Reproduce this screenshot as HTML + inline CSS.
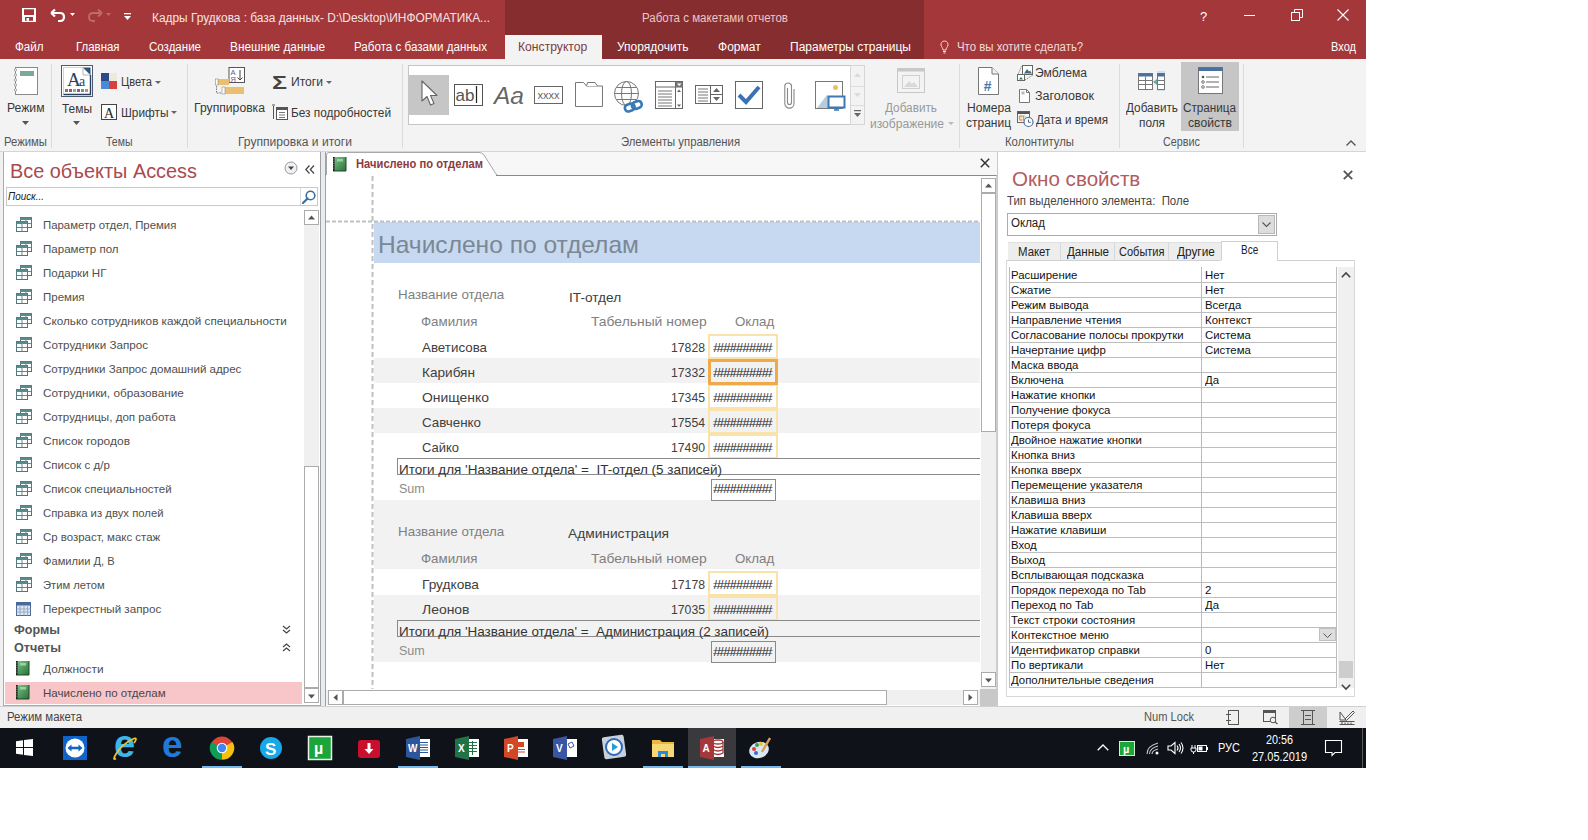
<!DOCTYPE html>
<html><head><meta charset="utf-8"><style>
html,body{margin:0;padding:0;background:#fff;}
body{width:1588px;height:840px;position:relative;overflow:hidden;font-family:"Liberation Sans",sans-serif;}
.b{position:absolute;box-sizing:border-box;}
.t{position:absolute;white-space:pre;line-height:1.117;transform-origin:0 0;font-family:"Liberation Sans",sans-serif;}
svg{position:absolute;overflow:visible;}
</style></head><body>
<div class=b style="left:0px;top:0px;width:1366px;height:768px;background:#F0F0F0"></div>
<div class=b style="left:0px;top:0px;width:1366px;height:59px;background:#A4373A"></div>
<div class=b style="left:505px;top:0px;width:419px;height:59px;background:#862D30"></div>
<div class=b style="left:505px;top:35px;width:97px;height:24px;background:#F3F3F3"></div>
<div class=b style="left:0px;top:59px;width:1366px;height:93px;background:#F3F3F3;border-bottom:1px solid #D5D5D5"></div>
<svg style="left:22px;top:8px" width="14" height="14" viewBox="0 0 14 14"><rect x="0" y="0" width="14" height="14" fill="#fff"/><rect x="2" y="1.3" width="10" height="5.7" fill="#A4373A"/><rect x="3" y="9" width="8" height="3.8" fill="#A4373A"/><rect x="4.5" y="10" width="2.5" height="2.8" fill="#fff"/></svg>
<svg style="left:50px;top:8px" width="26" height="14" viewBox="0 0 26 14"><path d="M3 5 H10 Q14 5 14 9 Q14 13 10 13 H8" fill="none" stroke="#fff" stroke-width="2.2"/><path d="M1.2 5 L5 1.5 M1.2 5 L5 8.5" stroke="#fff" stroke-width="2.2" fill="none"/><path d="M20 5 L25 5 L22.5 8 Z" fill="#fff"/></svg>
<svg style="left:86px;top:8px" width="26" height="14" viewBox="0 0 26 14"><path d="M14 5 H7 Q3 5 3 9 Q3 13 7 13 H9" fill="none" stroke="#C06A6C" stroke-width="1.8"/><path d="M16 5 L12 1.5 M16 5 L12 8.5" stroke="#C06A6C" stroke-width="1.8" fill="none"/><path d="M20 5 L25 5 L22.5 8 Z" fill="#C06A6C"/></svg>
<svg style="left:123px;top:13px" width="9" height="8" viewBox="0 0 9 8"><rect x="1" y="0" width="7" height="1.3" fill="#fff"/><path d="M1 3 L8 3 L4.5 7 Z" fill="#fff"/></svg>
<div class=b style="left:1244px;top:15px;width:11px;height:1px;background:#fff"></div>
<svg style="left:1291px;top:9px" width="12" height="12" viewBox="0 0 12 12"><rect x="0.5" y="3.5" width="8" height="8" fill="none" stroke="#fff"/><path d="M3.5 3.5 V0.5 H11.5 V8.5 H8.5" fill="none" stroke="#fff"/></svg>
<svg style="left:1337px;top:9px" width="12" height="12" viewBox="0 0 12 12"><path d="M0.5 0.5 L11.5 11.5 M11.5 0.5 L0.5 11.5" stroke="#fff" stroke-width="1.1"/></svg>
<svg style="left:940px;top:40px" width="9" height="14" viewBox="0 0 9 14"><path d="M4.5 1 C1.5 1 0.8 3.5 1 5 C1.3 7 3 8 3 10 H6 C6 8 7.7 7 8 5 C8.2 3.5 7.5 1 4.5 1 Z" fill="none" stroke="#F3D9D9" stroke-width="1"/><path d="M3 11.5 H6 M3.5 13 H5.5" stroke="#F3D9D9"/></svg>
<div class=b style="left:51px;top:64px;width:1px;height:84px;background:#DCDCDC"></div>
<div class=b style="left:187px;top:64px;width:1px;height:84px;background:#DCDCDC"></div>
<div class=b style="left:402px;top:64px;width:1px;height:84px;background:#DCDCDC"></div>
<div class=b style="left:959px;top:64px;width:1px;height:84px;background:#DCDCDC"></div>
<div class=b style="left:1119px;top:64px;width:1px;height:84px;background:#DCDCDC"></div>
<div class=b style="left:1243px;top:64px;width:1px;height:84px;background:#DCDCDC"></div>
<svg style="left:14px;top:67px" width="24" height="28" viewBox="0 0 24 28"><rect x="1.5" y="0.5" width="22" height="27" fill="#fff" stroke="#8A8A8A"/><rect x="6" y="4" width="14" height="5" fill="#7BA89A"/><circle cx="1.5" cy="3" r="1.2" fill="#fff" stroke="#888" stroke-width=".7"/><circle cx="1.5" cy="8" r="1.2" fill="#fff" stroke="#888" stroke-width=".7"/><circle cx="1.5" cy="13" r="1.2" fill="#fff" stroke="#888" stroke-width=".7"/><circle cx="1.5" cy="18" r="1.2" fill="#fff" stroke="#888" stroke-width=".7"/><circle cx="1.5" cy="23" r="1.2" fill="#fff" stroke="#888" stroke-width=".7"/></svg>
<svg style="left:22px;top:121px" width="7" height="4" viewBox="0 0 7 4"><path d="M0 0 H7 L3.5 4Z" fill="#555"/></svg>
<svg style="left:61px;top:65px" width="32" height="32" viewBox="0 0 32 32"><rect x="0.5" y="0.5" width="31" height="31" fill="#fff" stroke="#4A5A70"/><path d="M2.5 2.5 H22 L29.5 10 V29.5 H2.5Z" fill="#fff" stroke="#C0C8D0" stroke-width=".8"/><path d="M22 2.5 H29.5 V10Z" fill="#2F4F7F"/><path d="M22 2.5 V10 H29.5" fill="none" stroke="#999" stroke-width=".7"/><text x="6" y="21" font-family="Liberation Serif" font-size="19" fill="#2A3F5F">A</text><text x="18" y="21" font-family="Liberation Serif" font-size="14" fill="#2A3F5F">a</text><path d="M29.5 10 V29.5 H2.5" fill="none" stroke="#2A3F5F" stroke-width="1.4"/><rect x="4" y="24" width="3" height="3" fill="#8A6E7E"/><rect x="8" y="24" width="3" height="3" fill="#A05A5A"/><rect x="12" y="24" width="3" height="3" fill="#9AAA7A"/><rect x="16" y="24" width="3" height="3" fill="#8A5A8A"/><rect x="20" y="24" width="3" height="3" fill="#6A9A8A"/><rect x="24" y="24" width="3" height="3" fill="#D08A6A"/></svg>
<svg style="left:73px;top:121px" width="7" height="4" viewBox="0 0 7 4"><path d="M0 0 H7 L3.5 4Z" fill="#555"/></svg>
<svg style="left:101px;top:73px" width="16" height="16" viewBox="0 0 16 16"><rect x="0" y="0" width="8" height="8" fill="#2B4A8A"/><rect x="8" y="0" width="8" height="8" fill="#F1E8DC"/><rect x="0" y="8" width="8" height="8" fill="#4A8AD8"/><rect x="8" y="8" width="8" height="8" fill="#D84040"/></svg>
<svg style="left:155px;top:81px" width="6" height="3" viewBox="0 0 6 3"><path d="M0 0 H6 L3 3Z" fill="#666"/></svg>
<svg style="left:101px;top:104px" width="16" height="16" viewBox="0 0 16 16"><rect x="0.5" y="0.5" width="15" height="15" fill="#fff" stroke="#444"/><text x="3" y="13.5" font-family="Liberation Serif" font-size="14" fill="#222">A</text></svg>
<svg style="left:171px;top:111px" width="6" height="3" viewBox="0 0 6 3"><path d="M0 0 H6 L3 3Z" fill="#666"/></svg>
<svg style="left:215px;top:67px" width="30" height="28" viewBox="0 0 30 28"><rect x="14" y="0.5" width="15.5" height="15" fill="#fff" stroke="#555"/><text x="15.5" y="7.5" font-size="7.5" font-family="Liberation Sans" fill="#3A6AA8">А</text><text x="15.5" y="14.5" font-size="7.5" font-family="Liberation Sans" fill="#8A4A8A">Я</text><path d="M25 3 V13 M22.5 10.5 L25 13 L27.5 10.5" stroke="#444" fill="none"/><rect x="3" y="12" width="11" height="6" fill="#EAC070"/><rect x="0.5" y="12" width="2.5" height="6" fill="#fff" stroke="#999" stroke-width=".7"/><rect x="10" y="20" width="19" height="7" fill="#EAC070"/><rect x="7" y="20" width="3" height="7" fill="#fff" stroke="#999" stroke-width=".7"/><path d="M1.5 19 V26 H6" stroke="#777" stroke-dasharray="1.5 1" fill="none"/></svg>
<svg style="left:326px;top:81px" width="6" height="3" viewBox="0 0 6 3"><path d="M0 0 H6 L3 3Z" fill="#666"/></svg>
<svg style="left:272px;top:104px" width="16" height="16" viewBox="0 0 16 16"><rect x="4.5" y="3.5" width="11" height="12" fill="#fff" stroke="#555"/><rect x="4.5" y="3.5" width="11" height="2.5" fill="#555"/><path d="M7 8.5 H13 M7 11 H13 M7 13.5 H13" stroke="#777"/><path d="M1.5 2 V15" stroke="#555"/><path d="M0 1 H3" stroke="#555"/></svg>
<div class=b style="left:408px;top:65px;width:443px;height:60px;background:#FFFFFF;border:1px solid #C6C6C6;border-right:none"></div>
<div class=b style="left:850px;top:65px;width:15px;height:60px;background:#F3F3F3;border:1px solid #D6D6D6"></div>
<div class=b style="left:851px;top:86px;width:13px;height:1px;background:#DCDCDC"></div>
<div class=b style="left:851px;top:105px;width:13px;height:1px;background:#DCDCDC"></div>
<svg style="left:854px;top:73px" width="7" height="4" viewBox="0 0 7 4"><path d="M0 4 L3.5 0 L7 4Z" fill="#DADADA"/></svg>
<svg style="left:854px;top:93px" width="7" height="4" viewBox="0 0 7 4"><path d="M0 0 L3.5 4 L7 0Z" fill="#DADADA"/></svg>
<svg style="left:853px;top:110px" width="9" height="9" viewBox="0 0 9 9"><rect x="1" y="0" width="7" height="1.2" fill="#666"/><path d="M1 3 H8 L4.5 7Z" fill="#666"/></svg>
<div class=b style="left:409px;top:75px;width:40px;height:40px;background:#C6C6C6"></div>
<svg style="left:421px;top:80px" width="18" height="28" viewBox="0 0 18 28"><path d="M1 1 L1 21 L6 16.5 L9.5 25 L13 23.5 L9.5 15.5 L16 15.5 Z" fill="#fff" stroke="#666" stroke-width="1.1" stroke-linejoin="round"/></svg>
<svg style="left:454px;top:84px" width="29" height="22" viewBox="0 0 29 22"><rect x="0.5" y="0.5" width="28" height="21" fill="#fff" stroke="#555"/><text x="1.5" y="16.5" font-family="Liberation Sans" font-size="17" fill="#555">ab</text><path d="M22.5 2 V19" stroke="#222" stroke-width="1.2"/></svg>
<svg style="left:534px;top:86px" width="29" height="18" viewBox="0 0 29 18"><rect x="0.5" y="0.5" width="28" height="17" fill="#fff" stroke="#666"/><text x="3.5" y="12.5" font-family="Liberation Sans" font-size="11" fill="#666">xxxx</text></svg>
<svg style="left:575px;top:82px" width="28" height="25" viewBox="0 0 28 25"><path d="M0.5 0.5 H8.5 L11.5 4 H27.5 V24.5 H0.5Z" fill="#fff" stroke="#777"/><path d="M11.5 4 L12.5 0.5 H20 L22.5 4" fill="#fff" stroke="#777"/></svg>
<svg style="left:614px;top:81px" width="32" height="31" viewBox="0 0 32 31"><circle cx="12.5" cy="12.5" r="12" fill="none" stroke="#777"/><ellipse cx="12.5" cy="12.5" rx="5" ry="12" fill="none" stroke="#777"/><path d="M0.5 12.5 H24.5 M2.5 6.5 H22.5 M2.5 18.5 H22.5" stroke="#777" fill="none"/><g transform="rotate(-20 20 25)"><rect x="10.5" y="21.5" width="10" height="7" rx="3.5" fill="#fff" stroke="#3A78B8" stroke-width="2.6"/><rect x="18" y="21.5" width="10" height="7" rx="3.5" fill="none" stroke="#3A78B8" stroke-width="2.6"/></g></svg>
<svg style="left:655px;top:81px" width="28" height="28" viewBox="0 0 28 28"><rect x="0.5" y="0.5" width="27" height="27" fill="#fff" stroke="#666"/><path d="M20.5 0.5 V27.5 M0.5 6 H27.5" stroke="#666"/><rect x="21" y="1" width="6.5" height="5" fill="#777"/><path d="M22 2.5 L24.2 5 L26.5 2.5Z" fill="#fff"/><path d="M22 11 L24 8.5 L26 11Z M22 23.5 L24 26 L26 23.5Z" fill="#666"/><path d="M3 10 H17 M3 13 H17 M3 16 H17 M3 19 H17 M3 22 H17 M3 25 H17" stroke="#777"/></svg>
<svg style="left:695px;top:85px" width="28" height="19" viewBox="0 0 28 19"><rect x="0.5" y="0.5" width="27" height="18" fill="#fff" stroke="#666"/><path d="M15.5 0.5 V18.5 M15.5 9.5 H27.5" stroke="#666"/><path d="M3 4 H13 M3 7 H13 M3 10 H13 M3 13 H13 M3 16 H13" stroke="#777"/><path d="M18 7 L21.5 3 L25 7Z M18 12 L21.5 16 L25 12Z" fill="#666"/></svg>
<svg style="left:735px;top:81px" width="28" height="28" viewBox="0 0 28 28"><rect x="0.5" y="0.5" width="27" height="27" fill="#fff" stroke="#666"/><path d="M4 14 L11 21 L24 6" fill="none" stroke="#3C72B4" stroke-width="4"/></svg>
<svg style="left:784px;top:81px" width="11" height="28" viewBox="0 0 11 28"><path d="M3.5 7 V21.5 A2 2 0 0 0 7.5 21.5 V4.5 A3.5 3.5 0 0 0 0.8 4.5 V22.5 A4.6 4.6 0 0 0 10 22.5 V8" fill="none" stroke="#888" stroke-width="1.1"/></svg>
<svg style="left:815px;top:81px" width="31" height="31" viewBox="0 0 31 31"><rect x="0.5" y="0.5" width="27" height="27" fill="#fff" stroke="#777"/><circle cx="20.5" cy="6.5" r="2.5" fill="#E8C060"/><path d="M2 27 L12 14 L16 19 V27Z" fill="#B8CCE0"/><rect x="13.5" y="15.5" width="16" height="11" fill="#fff" stroke="#3A78B8" stroke-width="2"/><path d="M19 29 H24 M21.5 27 V29" stroke="#3A78B8" stroke-width="1.5"/></svg>
<svg style="left:897px;top:68px" width="28" height="25" viewBox="0 0 28 25"><rect x="0.5" y="0.5" width="27" height="24" fill="#F3F3F3" stroke="#C8C8C8"/><rect x="0.5" y="0.5" width="27" height="3" fill="#C8C8C8"/><rect x="5.5" y="7.5" width="17" height="13" fill="none" stroke="#D0D0D0"/><path d="M7 19 L12 13 L15 16 L17 14 L21 19Z" fill="#D8D8D8"/></svg>
<svg style="left:948px;top:122px" width="6" height="3" viewBox="0 0 6 3"><path d="M0 0 H6 L3 3Z" fill="#BBB"/></svg>
<svg style="left:978px;top:67px" width="22" height="28" viewBox="0 0 22 28"><path d="M0.5 0.5 H14 L20.5 7 V27.5 H0.5Z" fill="#fff" stroke="#777"/><path d="M14 0.5 V7 H20.5" fill="#F3F3F3" stroke="#777"/><text x="5.5" y="23.5" font-family="Liberation Sans" font-size="14" font-weight="bold" font-style="italic" fill="#4A78B0">#</text></svg>
<svg style="left:1017px;top:65px" width="17" height="16" viewBox="0 0 17 16"><rect x="5.5" y="0.5" width="10" height="9" fill="#fff" stroke="#666"/><path d="M7 8.5 L10 4 L12 6.5 L13 5.5 L15 8.5Z" fill="#3A7080"/><rect x="0.5" y="9.5" width="7" height="6" fill="#fff" stroke="#666"/><path d="M2 14.5 L4 12 L6 14.5Z" fill="#3A7080"/><path d="M1.5 8.5 L4.5 1" stroke="#666" stroke-dasharray="1 1.2"/><path d="M8 15 L16 10" stroke="#666" stroke-dasharray="1 1.2"/></svg>
<svg style="left:1019px;top:89px" width="12" height="15" viewBox="0 0 12 15"><path d="M0.5 0.5 H7.5 L10.5 3.5 V13.5 H0.5Z" fill="#fff" stroke="#777"/><path d="M7.5 0.5 V3.5 H10.5" fill="none" stroke="#777"/><rect x="2.5" y="2.5" width="3" height="3" fill="#C8B4A8"/></svg>
<svg style="left:1017px;top:111px" width="18" height="17" viewBox="0 0 18 17"><rect x="0.5" y="0.5" width="12" height="11" fill="#fff" stroke="#666"/><rect x="0.5" y="0.5" width="12" height="2.5" fill="#555"/><path d="M0.5 6 H12.5 M4 3 V11.5 M8 3 V11.5" stroke="#BBB" stroke-width=".6"/><rect x="2.5" y="5" width="4" height="4" fill="none" stroke="#E09850" stroke-width="1.2"/><circle cx="11.5" cy="11" r="4.5" fill="#fff" stroke="#4A6A8A" stroke-width="1.1"/><path d="M11.5 8.5 V11.3 H13.8" stroke="#4A6A8A" fill="none"/></svg>
<svg style="left:1138px;top:71px" width="27" height="20" viewBox="0 0 27 20"><rect x="0.5" y="2.5" width="14" height="16" fill="#fff" stroke="#777"/><rect x="0.5" y="2.5" width="14" height="3" fill="#4A70A0"/><path d="M0.5 9.5 H14.5 M0.5 13.5 H14.5 M7.5 5.5 V18.5" stroke="#777"/><rect x="19" y="0" width="8" height="20" fill="#D0E0EC"/><rect x="19.5" y="2.5" width="7" height="16" fill="#fff" stroke="#777"/><rect x="19.5" y="2.5" width="7" height="3" fill="#4A70A0"/><path d="M19.5 9.5 H26.5 M19.5 13.5 H26.5" stroke="#777"/><path d="M15 11 L19 8 V14Z" fill="#6AA8A0"/></svg>
<div class=b style="left:1181px;top:62px;width:58px;height:69px;background:#C6C6C6"></div>
<svg style="left:1198px;top:67px" width="25" height="27" viewBox="0 0 25 27"><rect x="0.5" y="0.5" width="24" height="26" fill="#fff" stroke="#777"/><rect x="0.5" y="0.5" width="24" height="3.5" fill="#4A70A0"/><circle cx="5" cy="10" r="1.3" fill="#555"/><circle cx="5" cy="15" r="1.3" fill="none" stroke="#555" stroke-width=".8"/><circle cx="5" cy="20" r="1.3" fill="none" stroke="#555" stroke-width=".8"/><path d="M8 10 H21 M8 15 H21 M8 20 H21" stroke="#666"/></svg>
<svg style="left:1346px;top:140px" width="10" height="6" viewBox="0 0 10 6"><path d="M0.5 5.5 L5 1 L9.5 5.5" fill="none" stroke="#555" stroke-width="1.4"/></svg>
<div class=b style="left:3px;top:152px;width:318px;height:554px;background:#fff;border:1px solid #ABABAB;border-top:none"></div>
<svg style="left:284px;top:161px" width="14" height="14" viewBox="0 0 14 14"><circle cx="7" cy="7" r="6" fill="#EEF0F4" stroke="#9A9A9A"/><path d="M4 5.5 H10 L7 9Z" fill="#444"/></svg>
<svg style="left:305px;top:165px" width="10" height="9" viewBox="0 0 10 9"><path d="M4.5 0.5 L0.8 4.5 L4.5 8.5 M9 0.5 L5.3 4.5 L9 8.5" fill="none" stroke="#444" stroke-width="1.2"/></svg>
<div class=b style="left:6px;top:187px;width:312px;height:19px;background:#fff;border:1px solid #C9C9C9"></div>
<div class=b style="left:300px;top:188px;width:1px;height:17px;background:#DADADA"></div>
<svg style="left:302px;top:190px" width="14" height="14" viewBox="0 0 14 14"><circle cx="8.5" cy="5.5" r="4.3" fill="none" stroke="#3C6E9C" stroke-width="1.6"/><path d="M5.5 8.5 L1 13" stroke="#3C6E9C" stroke-width="2.2" stroke-linecap="round"/></svg>
<div class=b style="left:304px;top:210px;width:15px;height:478px;background:#F0F0F0"></div>
<div class=b style="left:304px;top:210px;width:15px;height:15px;background:#fff;border:1px solid #ABABAB"></div>
<svg style="left:308px;top:215px" width="8" height="5" viewBox="0 0 8 5"><path d="M0 4.5 L3.5 0.5 L7 4.5Z" fill="#555"/></svg>
<div class=b style="left:304px;top:466px;width:15px;height:222px;background:#fff;border:1px solid #ABABAB"></div>
<div class=b style="left:304px;top:688px;width:15px;height:15px;background:#fff;border:1px solid #ABABAB"></div>
<svg style="left:308px;top:694px" width="8" height="5" viewBox="0 0 8 5"><path d="M0 0.5 L3.5 4.5 L7 0.5Z" fill="#555"/></svg>
<div class=b style="left:320px;top:152px;width:6px;height:554px;background:#E8ECF2;border-left:1px solid #A0A0A0;border-right:1px solid #A0A0A0"></div>
<svg style="left:16px;top:217.0px" width="16" height="15" viewBox="0 0 16 15"><rect x="4.5" y="0.5" width="11" height="10" fill="#fff" stroke="#4A7A7A"/><rect x="4.5" y="0.5" width="11" height="2.5" fill="#5A8A8A"/><path d="M10 3 V10.5 M4.5 6.5 H15.5" stroke="#5A8A8A"/><rect x="0.5" y="4.5" width="11" height="10" fill="#fff" stroke="#4A7A7A"/><rect x="0.5" y="4.5" width="11" height="2.5" fill="#5A8A8A"/><path d="M6 7 V14.5 M0.5 10.5 H11.5" stroke="#5A8A8A"/></svg>
<svg style="left:16px;top:241.0px" width="16" height="15" viewBox="0 0 16 15"><rect x="4.5" y="0.5" width="11" height="10" fill="#fff" stroke="#4A7A7A"/><rect x="4.5" y="0.5" width="11" height="2.5" fill="#5A8A8A"/><path d="M10 3 V10.5 M4.5 6.5 H15.5" stroke="#5A8A8A"/><rect x="0.5" y="4.5" width="11" height="10" fill="#fff" stroke="#4A7A7A"/><rect x="0.5" y="4.5" width="11" height="2.5" fill="#5A8A8A"/><path d="M6 7 V14.5 M0.5 10.5 H11.5" stroke="#5A8A8A"/></svg>
<svg style="left:16px;top:265.0px" width="16" height="15" viewBox="0 0 16 15"><rect x="4.5" y="0.5" width="11" height="10" fill="#fff" stroke="#4A7A7A"/><rect x="4.5" y="0.5" width="11" height="2.5" fill="#5A8A8A"/><path d="M10 3 V10.5 M4.5 6.5 H15.5" stroke="#5A8A8A"/><rect x="0.5" y="4.5" width="11" height="10" fill="#fff" stroke="#4A7A7A"/><rect x="0.5" y="4.5" width="11" height="2.5" fill="#5A8A8A"/><path d="M6 7 V14.5 M0.5 10.5 H11.5" stroke="#5A8A8A"/></svg>
<svg style="left:16px;top:289.0px" width="16" height="15" viewBox="0 0 16 15"><rect x="4.5" y="0.5" width="11" height="10" fill="#fff" stroke="#4A7A7A"/><rect x="4.5" y="0.5" width="11" height="2.5" fill="#5A8A8A"/><path d="M10 3 V10.5 M4.5 6.5 H15.5" stroke="#5A8A8A"/><rect x="0.5" y="4.5" width="11" height="10" fill="#fff" stroke="#4A7A7A"/><rect x="0.5" y="4.5" width="11" height="2.5" fill="#5A8A8A"/><path d="M6 7 V14.5 M0.5 10.5 H11.5" stroke="#5A8A8A"/></svg>
<svg style="left:16px;top:313.0px" width="16" height="15" viewBox="0 0 16 15"><rect x="4.5" y="0.5" width="11" height="10" fill="#fff" stroke="#4A7A7A"/><rect x="4.5" y="0.5" width="11" height="2.5" fill="#5A8A8A"/><path d="M10 3 V10.5 M4.5 6.5 H15.5" stroke="#5A8A8A"/><rect x="0.5" y="4.5" width="11" height="10" fill="#fff" stroke="#4A7A7A"/><rect x="0.5" y="4.5" width="11" height="2.5" fill="#5A8A8A"/><path d="M6 7 V14.5 M0.5 10.5 H11.5" stroke="#5A8A8A"/></svg>
<svg style="left:16px;top:337.0px" width="16" height="15" viewBox="0 0 16 15"><rect x="4.5" y="0.5" width="11" height="10" fill="#fff" stroke="#4A7A7A"/><rect x="4.5" y="0.5" width="11" height="2.5" fill="#5A8A8A"/><path d="M10 3 V10.5 M4.5 6.5 H15.5" stroke="#5A8A8A"/><rect x="0.5" y="4.5" width="11" height="10" fill="#fff" stroke="#4A7A7A"/><rect x="0.5" y="4.5" width="11" height="2.5" fill="#5A8A8A"/><path d="M6 7 V14.5 M0.5 10.5 H11.5" stroke="#5A8A8A"/></svg>
<svg style="left:16px;top:361.0px" width="16" height="15" viewBox="0 0 16 15"><rect x="4.5" y="0.5" width="11" height="10" fill="#fff" stroke="#4A7A7A"/><rect x="4.5" y="0.5" width="11" height="2.5" fill="#5A8A8A"/><path d="M10 3 V10.5 M4.5 6.5 H15.5" stroke="#5A8A8A"/><rect x="0.5" y="4.5" width="11" height="10" fill="#fff" stroke="#4A7A7A"/><rect x="0.5" y="4.5" width="11" height="2.5" fill="#5A8A8A"/><path d="M6 7 V14.5 M0.5 10.5 H11.5" stroke="#5A8A8A"/></svg>
<svg style="left:16px;top:385.0px" width="16" height="15" viewBox="0 0 16 15"><rect x="4.5" y="0.5" width="11" height="10" fill="#fff" stroke="#4A7A7A"/><rect x="4.5" y="0.5" width="11" height="2.5" fill="#5A8A8A"/><path d="M10 3 V10.5 M4.5 6.5 H15.5" stroke="#5A8A8A"/><rect x="0.5" y="4.5" width="11" height="10" fill="#fff" stroke="#4A7A7A"/><rect x="0.5" y="4.5" width="11" height="2.5" fill="#5A8A8A"/><path d="M6 7 V14.5 M0.5 10.5 H11.5" stroke="#5A8A8A"/></svg>
<svg style="left:16px;top:409.0px" width="16" height="15" viewBox="0 0 16 15"><rect x="4.5" y="0.5" width="11" height="10" fill="#fff" stroke="#4A7A7A"/><rect x="4.5" y="0.5" width="11" height="2.5" fill="#5A8A8A"/><path d="M10 3 V10.5 M4.5 6.5 H15.5" stroke="#5A8A8A"/><rect x="0.5" y="4.5" width="11" height="10" fill="#fff" stroke="#4A7A7A"/><rect x="0.5" y="4.5" width="11" height="2.5" fill="#5A8A8A"/><path d="M6 7 V14.5 M0.5 10.5 H11.5" stroke="#5A8A8A"/></svg>
<svg style="left:16px;top:433.0px" width="16" height="15" viewBox="0 0 16 15"><rect x="4.5" y="0.5" width="11" height="10" fill="#fff" stroke="#4A7A7A"/><rect x="4.5" y="0.5" width="11" height="2.5" fill="#5A8A8A"/><path d="M10 3 V10.5 M4.5 6.5 H15.5" stroke="#5A8A8A"/><rect x="0.5" y="4.5" width="11" height="10" fill="#fff" stroke="#4A7A7A"/><rect x="0.5" y="4.5" width="11" height="2.5" fill="#5A8A8A"/><path d="M6 7 V14.5 M0.5 10.5 H11.5" stroke="#5A8A8A"/></svg>
<svg style="left:16px;top:457.0px" width="16" height="15" viewBox="0 0 16 15"><rect x="4.5" y="0.5" width="11" height="10" fill="#fff" stroke="#4A7A7A"/><rect x="4.5" y="0.5" width="11" height="2.5" fill="#5A8A8A"/><path d="M10 3 V10.5 M4.5 6.5 H15.5" stroke="#5A8A8A"/><rect x="0.5" y="4.5" width="11" height="10" fill="#fff" stroke="#4A7A7A"/><rect x="0.5" y="4.5" width="11" height="2.5" fill="#5A8A8A"/><path d="M6 7 V14.5 M0.5 10.5 H11.5" stroke="#5A8A8A"/></svg>
<svg style="left:16px;top:481.0px" width="16" height="15" viewBox="0 0 16 15"><rect x="4.5" y="0.5" width="11" height="10" fill="#fff" stroke="#4A7A7A"/><rect x="4.5" y="0.5" width="11" height="2.5" fill="#5A8A8A"/><path d="M10 3 V10.5 M4.5 6.5 H15.5" stroke="#5A8A8A"/><rect x="0.5" y="4.5" width="11" height="10" fill="#fff" stroke="#4A7A7A"/><rect x="0.5" y="4.5" width="11" height="2.5" fill="#5A8A8A"/><path d="M6 7 V14.5 M0.5 10.5 H11.5" stroke="#5A8A8A"/></svg>
<svg style="left:16px;top:505.0px" width="16" height="15" viewBox="0 0 16 15"><rect x="4.5" y="0.5" width="11" height="10" fill="#fff" stroke="#4A7A7A"/><rect x="4.5" y="0.5" width="11" height="2.5" fill="#5A8A8A"/><path d="M10 3 V10.5 M4.5 6.5 H15.5" stroke="#5A8A8A"/><rect x="0.5" y="4.5" width="11" height="10" fill="#fff" stroke="#4A7A7A"/><rect x="0.5" y="4.5" width="11" height="2.5" fill="#5A8A8A"/><path d="M6 7 V14.5 M0.5 10.5 H11.5" stroke="#5A8A8A"/></svg>
<svg style="left:16px;top:529.0px" width="16" height="15" viewBox="0 0 16 15"><rect x="4.5" y="0.5" width="11" height="10" fill="#fff" stroke="#4A7A7A"/><rect x="4.5" y="0.5" width="11" height="2.5" fill="#5A8A8A"/><path d="M10 3 V10.5 M4.5 6.5 H15.5" stroke="#5A8A8A"/><rect x="0.5" y="4.5" width="11" height="10" fill="#fff" stroke="#4A7A7A"/><rect x="0.5" y="4.5" width="11" height="2.5" fill="#5A8A8A"/><path d="M6 7 V14.5 M0.5 10.5 H11.5" stroke="#5A8A8A"/></svg>
<svg style="left:16px;top:553.0px" width="16" height="15" viewBox="0 0 16 15"><rect x="4.5" y="0.5" width="11" height="10" fill="#fff" stroke="#4A7A7A"/><rect x="4.5" y="0.5" width="11" height="2.5" fill="#5A8A8A"/><path d="M10 3 V10.5 M4.5 6.5 H15.5" stroke="#5A8A8A"/><rect x="0.5" y="4.5" width="11" height="10" fill="#fff" stroke="#4A7A7A"/><rect x="0.5" y="4.5" width="11" height="2.5" fill="#5A8A8A"/><path d="M6 7 V14.5 M0.5 10.5 H11.5" stroke="#5A8A8A"/></svg>
<svg style="left:16px;top:577.0px" width="16" height="15" viewBox="0 0 16 15"><rect x="4.5" y="0.5" width="11" height="10" fill="#fff" stroke="#4A7A7A"/><rect x="4.5" y="0.5" width="11" height="2.5" fill="#5A8A8A"/><path d="M10 3 V10.5 M4.5 6.5 H15.5" stroke="#5A8A8A"/><rect x="0.5" y="4.5" width="11" height="10" fill="#fff" stroke="#4A7A7A"/><rect x="0.5" y="4.5" width="11" height="2.5" fill="#5A8A8A"/><path d="M6 7 V14.5 M0.5 10.5 H11.5" stroke="#5A8A8A"/></svg>
<svg style="left:16px;top:601.5px" width="15" height="14" viewBox="0 0 15 14"><rect x="0.5" y="0.5" width="14" height="13" fill="#DDE6F2" stroke="#4A6A9A"/><rect x="0.5" y="0.5" width="14" height="3" fill="#4A6A9A"/><path d="M0.5 7 H14.5 M0.5 10 H14.5 M4 3.5 V13.5 M8 3.5 V13.5 M11.5 3.5 V13.5" stroke="#8AA0C0" stroke-width=".8"/></svg>
<svg style="left:282px;top:625px" width="9" height="9" viewBox="0 0 9 9"><path d="M1 1 L4.5 4 L8 1 M1 5 L4.5 8 L8 5" fill="none" stroke="#444" stroke-width="1.2"/></svg>
<svg style="left:282px;top:643px" width="9" height="9" viewBox="0 0 9 9"><path d="M1 4 L4.5 1 L8 4 M1 8 L4.5 5 L8 8" fill="none" stroke="#444" stroke-width="1.2"/></svg>
<div class=b style="left:5px;top:682px;width:297px;height:22px;background:#F8C5C8"></div>
<svg style="left:16px;top:661px" width="13" height="14" viewBox="0 0 13 14"><defs><linearGradient id="gA" x1="0" y1="0" x2="1" y2="1"><stop offset="0" stop-color="#7CC88A"/><stop offset="1" stop-color="#2A7038"/></linearGradient></defs><rect x="0" y="0" width="13" height="14" fill="url(#gA)"/><rect x="0" y="0" width="1.6" height="14" fill="#1A1A1A"/><path d="M0.8 1.5 V13" stroke="#DDD" stroke-width=".6" stroke-dasharray="1 1.3"/><rect x="4" y="2" width="6" height="2.5" fill="#A8DCB0" opacity=".8"/><path d="M13 0 V14 H0" fill="none" stroke="#1E4A28" stroke-width="1"/></svg>
<svg style="left:16px;top:685px" width="13" height="14" viewBox="0 0 13 14"><defs><linearGradient id="gA" x1="0" y1="0" x2="1" y2="1"><stop offset="0" stop-color="#7CC88A"/><stop offset="1" stop-color="#2A7038"/></linearGradient></defs><rect x="0" y="0" width="13" height="14" fill="url(#gA)"/><rect x="0" y="0" width="1.6" height="14" fill="#1A1A1A"/><path d="M0.8 1.5 V13" stroke="#DDD" stroke-width=".6" stroke-dasharray="1 1.3"/><rect x="4" y="2" width="6" height="2.5" fill="#A8DCB0" opacity=".8"/><path d="M13 0 V14 H0" fill="none" stroke="#1E4A28" stroke-width="1"/></svg>
<div class=b style="left:326px;top:152px;width:671px;height:24px;background:#F7F7F7"></div>
<svg style="left:326px;top:152px" width="175" height="25" viewBox="0 0 175 25"><path d="M0.5 24.5 V3 Q0.5 0.5 3 0.5 H153 Q156 0.5 158 3 L170 22 Q172 24.5 175 24.5" fill="#fff" stroke="#A8A8A8"/></svg>
<svg style="left:333px;top:157px" width="13" height="14" viewBox="0 0 13 14"><defs><linearGradient id="gB" x1="0" y1="0" x2="1" y2="1"><stop offset="0" stop-color="#7CC88A"/><stop offset="1" stop-color="#2A7038"/></linearGradient></defs><rect x="0" y="0" width="13" height="14" fill="url(#gB)"/><rect x="0" y="0" width="1.6" height="14" fill="#1A1A1A"/><path d="M0.8 1.5 V13" stroke="#DDD" stroke-width=".6" stroke-dasharray="1 1.3"/><rect x="4" y="2" width="6" height="2.5" fill="#A8DCB0" opacity=".8"/><path d="M13 0 V14 H0" fill="none" stroke="#1E4A28" stroke-width="1"/></svg>
<svg style="left:980px;top:158px" width="10" height="10" viewBox="0 0 10 10"><path d="M0.8 0.8 L9.2 9.2 M9.2 0.8 L0.8 9.2" stroke="#333" stroke-width="1.5"/></svg>
<div class=b style="left:325px;top:175px;width:672px;height:532px;background:#fff;border:1px solid #A0A0A0;border-top:1px solid #8A8A8A;border-right:1px solid #D0D0D0"></div>
<div class=b style="left:326px;top:175px;width:170px;height:1px;background:#fff"></div>
<div class=b style="left:374px;top:222px;width:606px;height:41px;background:#C6D9F0"></div>
<svg style="left:326px;top:220px" width="654" height="3" viewBox="0 0 654 3"><line x1="0" y1="1.5" x2="654" y2="1.5" stroke="#C0C0C0" stroke-width="2" stroke-dasharray="4 2"/></svg>
<svg style="left:371px;top:176px" width="3" height="513" viewBox="0 0 3 513"><line x1="1.5" y1="0" x2="1.5" y2="513" stroke="#C0C0C0" stroke-width="2" stroke-dasharray="5 3"/></svg>
<div class=b style="left:374px;top:358px;width:606px;height:25px;background:#F2F2F2"></div>
<div class=b style="left:374px;top:408px;width:606px;height:25px;background:#F2F2F2"></div>
<div class=b style="left:708px;top:334px;width:70px;height:25px;border:2px solid #F9E3AA"></div>
<div class=b style="left:708px;top:359px;width:70px;height:25px;border:2px solid #F9E3AA"></div>
<div class=b style="left:708px;top:384px;width:70px;height:25px;border:2px solid #F9E3AA"></div>
<div class=b style="left:708px;top:409px;width:70px;height:25px;border:2px solid #F9E3AA"></div>
<div class=b style="left:708px;top:434px;width:70px;height:25px;border:2px solid #F9E3AA"></div>
<div class=b style="left:708px;top:359px;width:70px;height:26px;border:3px solid #F0A948"></div>
<div class=b style="left:397px;top:458px;width:583px;height:17px;border:1px solid #8A8A8A;border-right:none"></div>
<div class=b style="left:374px;top:500px;width:606px;height:69px;background:#F2F2F2"></div>
<div class=b style="left:711px;top:479px;width:65px;height:22px;border:1px solid #8A8A8A"></div>
<div class=b style="left:374px;top:595px;width:606px;height:67px;background:#F2F2F2"></div>
<div class=b style="left:708px;top:571px;width:70px;height:25px;border:2px solid #F9E3AA"></div>
<div class=b style="left:708px;top:596px;width:70px;height:25px;border:2px solid #F9E3AA"></div>
<div class=b style="left:397px;top:620px;width:583px;height:17px;border:1px solid #8A8A8A;border-right:none"></div>
<div class=b style="left:711px;top:641px;width:65px;height:22px;border:1px solid #8A8A8A"></div>
<div class=b style="left:981px;top:178px;width:15px;height:511px;background:#F0F0F0"></div>
<div class=b style="left:981px;top:178px;width:15px;height:15px;background:#fff;border:1px solid #ABABAB"></div>
<svg style="left:985px;top:183px" width="8" height="5" viewBox="0 0 8 5"><path d="M0 4.5 L3.5 0.5 L7 4.5Z" fill="#555"/></svg>
<div class=b style="left:981px;top:193px;width:15px;height:239px;background:#fff;border:1px solid #ABABAB"></div>
<div class=b style="left:981px;top:672px;width:15px;height:15px;background:#fff;border:1px solid #ABABAB"></div>
<svg style="left:985px;top:678px" width="8" height="5" viewBox="0 0 8 5"><path d="M0 0.5 L3.5 4.5 L7 0.5Z" fill="#555"/></svg>
<div class=b style="left:326px;top:690px;width:655px;height:15px;background:#F0F0F0"></div>
<div class=b style="left:328px;top:690px;width:15px;height:15px;background:#fff;border:1px solid #ABABAB"></div>
<svg style="left:333px;top:694px" width="5" height="8" viewBox="0 0 5 8"><path d="M4.5 0 L0.5 3.5 L4.5 7Z" fill="#555"/></svg>
<div class=b style="left:343px;top:690px;width:544px;height:15px;background:#fff;border:1px solid #ABABAB"></div>
<div class=b style="left:963px;top:690px;width:15px;height:15px;background:#fff;border:1px solid #ABABAB"></div>
<svg style="left:968px;top:694px" width="5" height="8" viewBox="0 0 5 8"><path d="M0.5 0 L4.5 3.5 L0.5 7Z" fill="#555"/></svg>
<div class=b style="left:980px;top:689px;width:17px;height:17px;background:#C8C8C8"></div>
<div class=b style="left:997px;top:152px;width:369px;height:554px;background:#fff;border-left:1px solid #C8C8C8"></div>
<svg style="left:1343px;top:170px" width="10" height="10" viewBox="0 0 10 10"><path d="M0.8 0.8 L9.2 9.2 M9.2 0.8 L0.8 9.2" stroke="#555" stroke-width="1.8"/></svg>
<div class=b style="left:1007px;top:213px;width:270px;height:23px;background:#fff;border:1px solid #ABABAB"></div>
<div class=b style="left:1258px;top:215px;width:17px;height:19px;background:#DDDDDD;border:1px solid #B8B8B8"></div>
<svg style="left:1262px;top:222px" width="9" height="5" viewBox="0 0 9 5"><path d="M0.5 0.5 L4.5 4.5 L8.5 0.5" fill="none" stroke="#555" stroke-width="1.1"/></svg>
<div class=b style="left:1008px;top:242px;width:214px;height:19px;background:#EDEDED;border-top:1px solid #E0E0E0"></div>
<div class=b style="left:1060px;top:243px;width:1px;height:18px;background:#D8D8D8"></div>
<div class=b style="left:1114px;top:243px;width:1px;height:18px;background:#D8D8D8"></div>
<div class=b style="left:1168px;top:243px;width:1px;height:18px;background:#D8D8D8"></div>
<div class=b style="left:1221px;top:241px;width:57px;height:21px;background:#fff;border:1px solid #D0D0D0;border-bottom:none"></div>
<div class=b style="left:1006px;top:260px;width:349px;height:437px;background:#fff;border:1px solid #D8D8D8;border-top:1px solid #D0D0D0"></div>
<div class=b style="left:1221px;top:260px;width:56px;height:1px;background:#fff"></div>
<svg style="left:1009px;top:267px" width="328" height="421" viewBox="0 0 328 421"><path d="M0.5 0 V420.5 H327.5 V0" fill="#fff" stroke="#BDBDBD"/><line x1="0" y1="15.5" x2="328" y2="15.5" stroke="#BDBDBD"/><line x1="0" y1="30.5" x2="328" y2="30.5" stroke="#BDBDBD"/><line x1="0" y1="45.5" x2="328" y2="45.5" stroke="#BDBDBD"/><line x1="0" y1="60.5" x2="328" y2="60.5" stroke="#BDBDBD"/><line x1="0" y1="75.5" x2="328" y2="75.5" stroke="#BDBDBD"/><line x1="0" y1="90.5" x2="328" y2="90.5" stroke="#BDBDBD"/><line x1="0" y1="105.5" x2="328" y2="105.5" stroke="#BDBDBD"/><line x1="0" y1="120.5" x2="328" y2="120.5" stroke="#BDBDBD"/><line x1="0" y1="135.5" x2="328" y2="135.5" stroke="#BDBDBD"/><line x1="0" y1="150.5" x2="328" y2="150.5" stroke="#BDBDBD"/><line x1="0" y1="165.5" x2="328" y2="165.5" stroke="#BDBDBD"/><line x1="0" y1="180.5" x2="328" y2="180.5" stroke="#BDBDBD"/><line x1="0" y1="195.5" x2="328" y2="195.5" stroke="#BDBDBD"/><line x1="0" y1="210.5" x2="328" y2="210.5" stroke="#BDBDBD"/><line x1="0" y1="225.5" x2="328" y2="225.5" stroke="#BDBDBD"/><line x1="0" y1="240.5" x2="328" y2="240.5" stroke="#BDBDBD"/><line x1="0" y1="255.5" x2="328" y2="255.5" stroke="#BDBDBD"/><line x1="0" y1="270.5" x2="328" y2="270.5" stroke="#BDBDBD"/><line x1="0" y1="285.5" x2="328" y2="285.5" stroke="#BDBDBD"/><line x1="0" y1="300.5" x2="328" y2="300.5" stroke="#BDBDBD"/><line x1="0" y1="315.5" x2="328" y2="315.5" stroke="#BDBDBD"/><line x1="0" y1="330.5" x2="328" y2="330.5" stroke="#BDBDBD"/><line x1="0" y1="345.5" x2="328" y2="345.5" stroke="#BDBDBD"/><line x1="0" y1="360.5" x2="328" y2="360.5" stroke="#BDBDBD"/><line x1="0" y1="375.5" x2="328" y2="375.5" stroke="#BDBDBD"/><line x1="0" y1="390.5" x2="328" y2="390.5" stroke="#BDBDBD"/><line x1="0" y1="405.5" x2="328" y2="405.5" stroke="#BDBDBD"/><line x1="0" y1="420.5" x2="328" y2="420.5" stroke="#BDBDBD"/><line x1="192.5" y1="0" x2="192.5" y2="420" stroke="#BDBDBD"/></svg>
<div class=b style="left:1319px;top:628px;width:17px;height:13px;background:#DDDDDD;border:1px solid #C0C0C0"></div>
<svg style="left:1323px;top:633px" width="9" height="5" viewBox="0 0 9 5"><path d="M0.5 0.5 L4.5 4.5 L8.5 0.5" fill="none" stroke="#555"/></svg>
<div class=b style="left:1338px;top:267px;width:16px;height:421px;background:#F0F0F0"></div>
<svg style="left:1341px;top:272px" width="10" height="6" viewBox="0 0 10 6"><path d="M0.8 5.2 L5 1 L9.2 5.2" fill="none" stroke="#444" stroke-width="1.6"/></svg>
<div class=b style="left:1339px;top:661px;width:14px;height:17px;background:#CDCDCD"></div>
<svg style="left:1341px;top:684px" width="10" height="6" viewBox="0 0 10 6"><path d="M0.8 0.8 L5 5 L9.2 0.8" fill="none" stroke="#444" stroke-width="1.6"/></svg>
<div class=b style="left:0px;top:706px;width:1366px;height:22px;background:#F0F0F0;border-top:1px solid #D0D0D0"></div>
<div class=b style="left:1289px;top:707px;width:38px;height:21px;background:#CDCDCD"></div>
<svg style="left:1226px;top:710px" width="13" height="15" viewBox="0 0 13 15"><rect x="2.5" y="0.5" width="10" height="14" fill="none" stroke="#555"/><path d="M0 4.5 H5 M0 10.5 H5" stroke="#555"/></svg>
<svg style="left:1263px;top:710px" width="15" height="14" viewBox="0 0 15 14"><rect x="0.5" y="0.5" width="12" height="11" fill="none" stroke="#555"/><rect x="0.5" y="0.5" width="12" height="2.5" fill="#555"/><circle cx="10" cy="10" r="2.8" fill="#F0F0F0" stroke="#555"/><path d="M12 12 L14.5 14" stroke="#555" stroke-width="1.3"/></svg>
<svg style="left:1301px;top:710px" width="14" height="15" viewBox="0 0 14 15"><rect x="2.5" y="0.5" width="9" height="14" fill="none" stroke="#555"/><path d="M0 0.5 H14 M0 14.5 H14 M4 5.5 H10 M4 9.5 H10" stroke="#555"/></svg>
<svg style="left:1339px;top:709px" width="16" height="16" viewBox="0 0 16 16"><path d="M0.5 15.5 H15.5 M0.5 12.5 H15.5 M3 12.5 V15.5 M6 13.5 V15.5 M9 13.5 V15.5 M12 13.5 V15.5" stroke="#555"/><path d="M1 11 L1 3 L7 11Z" fill="none" stroke="#555"/><path d="M6 10 L14 2 L15.5 3.5 L7.5 11.5 Z" fill="none" stroke="#555"/></svg>
<div class=b style="left:0px;top:728px;width:1366px;height:40px;background:#10121A"></div>
<svg style="left:16px;top:739px" width="17" height="17" viewBox="0 0 17 17"><path d="M0 2.3 L7 1.3 V8 H0Z M8 1.1 L17 0 V8 H8Z M0 9 H7 V15.7 L0 14.7Z M8 9 H17 V17 L8 15.9Z" fill="#fff"/></svg>
<svg style="left:63px;top:736px" width="24" height="24" viewBox="0 0 24 24"><rect width="24" height="24" fill="#0E64C8"/><circle cx="12" cy="12" r="9.5" fill="#fff"/><path d="M4.5 12 L8.5 8.5 V10.8 H15.5 V8.5 L19.5 12 L15.5 15.5 V13.2 H8.5 V15.5Z" fill="#0E64C8"/></svg>
<svg style="left:113px;top:736px" width="24" height="24" viewBox="0 0 24 24"><text x="1" y="21" font-family="Liberation Sans" font-weight="bold" font-size="38" fill="#3DB6EA">e</text><path d="M3 22.5 Q-1 25 3 18 Q9 8 21 2.5 Q25 1.5 21 7" fill="none" stroke="#F2C233" stroke-width="1.7"/></svg>
<svg style="left:163px;top:737px" width="22" height="22" viewBox="0 0 22 22"><text x="-1" y="20" font-family="Liberation Sans" font-weight="bold" font-size="37" fill="#1F7AD9">e</text></svg>
<svg style="left:210px;top:736px" width="24" height="24" viewBox="0 0 24 24"><circle cx="12" cy="12" r="11.5" fill="#DB4437"/><path d="M12 12 L22.5 6 A11.5 11.5 0 0 1 12 23.5Z" fill="#F4C20D"/><path d="M12 12 L12 23.5 A11.5 11.5 0 0 1 1.5 6Z" fill="#0F9D58"/><circle cx="12" cy="12" r="5.3" fill="#fff"/><circle cx="12" cy="12" r="4.2" fill="#4285F4"/></svg>
<div class=b style="left:202px;top:766px;width:40px;height:2px;background:#76B9ED"></div>
<svg style="left:259px;top:736px" width="24" height="24" viewBox="0 0 24 24"><circle cx="12" cy="12" r="11" fill="#16A8E8"/><text x="6" y="19" font-family="Liberation Sans" font-weight="bold" font-size="17" fill="#fff">S</text></svg>
<svg style="left:308px;top:736px" width="24" height="24" viewBox="0 0 24 24"><rect x="0.5" y="0.5" width="23" height="23" fill="#1BA53A" stroke="#E8F4E8" stroke-width="1.5"/><text x="6" y="18" font-family="Liberation Sans" font-weight="bold" font-size="16" fill="#fff">µ</text></svg>
<svg style="left:358px;top:740px" width="22" height="18" viewBox="0 0 22 18"><rect width="22" height="18" rx="3" fill="#C8102E"/><path d="M9.5 3 H12.5 V9 H15.5 L11 14 L6.5 9 H9.5Z" fill="#fff"/></svg>
<svg style="left:406px;top:736px" width="24" height="24" viewBox="0 0 24 24"><rect x="9" y="3" width="15" height="18" fill="#fff"/><path d="M13 6.5 H22 M13 9 H22 M13 11.5 H22 M13 14 H22 M13 16.5 H22" stroke="#2B579A" stroke-width="1.2"/><path d="M0 3 L14 0 V24 L0 21Z" fill="#2B579A"/><text x="2" y="16" font-family="Liberation Sans" font-weight="bold" font-size="10" fill="#fff">W</text></svg>
<div class=b style="left:398px;top:766px;width:40px;height:2px;background:#76B9ED"></div>
<svg style="left:455px;top:736px" width="24" height="24" viewBox="0 0 24 24"><rect x="9" y="3" width="15" height="18" fill="#fff"/><path d="M13 6.5 H22 M13 9.5 H22 M13 12.5 H22 M13 15.5 H22 M17.5 5 V19" stroke="#217346" stroke-width="1.1"/><path d="M0 3 L14 0 V24 L0 21Z" fill="#217346"/><text x="3" y="16" font-family="Liberation Sans" font-weight="bold" font-size="10" fill="#fff">X</text></svg>
<svg style="left:504px;top:736px" width="24" height="24" viewBox="0 0 24 24"><rect x="9" y="3" width="15" height="18" fill="#fff"/><rect x="14" y="6" width="6" height="5" fill="#D24726"/><path d="M14 13.5 H21 M14 16 H21" stroke="#D24726"/><path d="M0 3 L14 0 V24 L0 21Z" fill="#D24726"/><text x="3" y="16" font-family="Liberation Sans" font-weight="bold" font-size="10" fill="#fff">P</text></svg>
<svg style="left:553px;top:736px" width="24" height="24" viewBox="0 0 24 24"><rect x="9" y="3" width="15" height="18" fill="#fff"/><path d="M15 8 L19 6 L21 10 L17 12Z" fill="none" stroke="#3955A3"/><path d="M0 3 L14 0 V24 L0 21Z" fill="#3955A3"/><text x="3" y="16" font-family="Liberation Sans" font-weight="bold" font-size="10" fill="#fff">V</text></svg>
<svg style="left:602px;top:735px" width="24" height="24" viewBox="0 0 24 24"><rect x="1" y="1" width="22" height="22" rx="2" fill="#C8D0DC" transform="rotate(-8 12 12)"/><circle cx="12" cy="12" r="8" fill="#fff" stroke="#2A6AB8" stroke-width="2"/><path d="M10 8 L16 12 L10 16Z" fill="#2A9AD8"/></svg>
<svg style="left:652px;top:737px" width="22" height="22" viewBox="0 0 22 22"><path d="M0 3 H8 L10 5 H22 V20 H0Z" fill="#E8B838"/><rect x="0" y="7" width="22" height="13" fill="#F8D876"/><path d="M6 14 H16 V20 H13 V17 H9 V20 H6Z" fill="#2A8AD8"/></svg>
<div class=b style="left:643px;top:766px;width:40px;height:2px;background:#76B9ED"></div>
<div class=b style="left:688px;top:728px;width:48px;height:40px;background:#3A3A3E"></div>
<svg style="left:700px;top:736px" width="24" height="24" viewBox="0 0 24 24"><rect x="9" y="3" width="15" height="18" fill="#fff"/><ellipse cx="18" cy="6" rx="5" ry="2" fill="none" stroke="#A4373A" stroke-width="1.3"/><path d="M13 6 V17 Q18 20 23 17 V6 M13 10 Q18 13 23 10 M13 13.5 Q18 16.5 23 13.5" fill="none" stroke="#A4373A" stroke-width="1.3"/><path d="M0 3 L14 0 V24 L0 21Z" fill="#A4373A"/><text x="2.5" y="16" font-family="Liberation Sans" font-weight="bold" font-size="10" fill="#fff">A</text></svg>
<div class=b style="left:688px;top:766px;width:48px;height:2px;background:#76B9ED"></div>
<svg style="left:748px;top:736px" width="24" height="24" viewBox="0 0 24 24"><ellipse cx="11" cy="14" rx="10" ry="8" fill="#D8E8F4" transform="rotate(-20 11 14)"/><circle cx="6" cy="13" r="2" fill="#E04040"/><circle cx="9" cy="9" r="2" fill="#40A040"/><circle cx="13" cy="8" r="2" fill="#F0C030"/><circle cx="8" cy="17" r="2" fill="#3A6AD8"/><path d="M14 16 L22 2" stroke="#D8A050" stroke-width="2.5"/></svg>
<div class=b style="left:741px;top:766px;width:40px;height:2px;background:#76B9ED"></div>
<svg style="left:1097px;top:744px" width="12" height="7" viewBox="0 0 12 7"><path d="M0.7 6.3 L6 1 L11.3 6.3" fill="none" stroke="#fff" stroke-width="1.3"/></svg>
<svg style="left:1119px;top:741px" width="16" height="15" viewBox="0 0 16 15"><rect x="0.5" y="0.5" width="15" height="14" fill="#1BA53A" stroke="#D0F0D0"/><text x="4" y="12" font-family="Liberation Sans" font-weight="bold" font-size="11" fill="#fff">µ</text></svg>
<svg style="left:1146px;top:741px" width="13" height="14" viewBox="0 0 13 14"><path d="M1 13 Q1 5 12 2 M3.5 13 Q3.5 7.5 12 5 M6 13 Q6 9.5 12 8" fill="none" stroke="#ccc" stroke-width="1.1"/><circle cx="11" cy="12" r="1.5" fill="#fff"/></svg>
<svg style="left:1167px;top:741px" width="17" height="14" viewBox="0 0 17 14"><path d="M1 5 H4 L8 1.5 V12.5 L4 9 H1Z" fill="none" stroke="#fff" stroke-width="1.1"/><path d="M10 4.5 Q12 7 10 9.5 M12 3 Q15 7 12 11 M14 1.5 Q18 7 14 12.5" fill="none" stroke="#fff" stroke-width="1.1"/></svg>
<svg style="left:1191px;top:742px" width="17" height="12" viewBox="0 0 17 12"><path d="M1 3 V6 M4 3 V6 M0 6 H5 V8 Q5 10 2.5 10 Q0 10 0 8Z M2.5 10 V12" stroke="#fff" fill="none"/><rect x="6.5" y="3.5" width="9" height="6" fill="none" stroke="#fff"/><rect x="7.5" y="4.5" width="4" height="4" fill="#fff"/><rect x="15.5" y="5" width="1.5" height="3" fill="#fff"/></svg>
<svg style="left:1325px;top:740px" width="17" height="17" viewBox="0 0 17 17"><path d="M0.5 0.5 H16.5 V12.5 H10 L7 15.5 L7 12.5 H0.5Z" fill="none" stroke="#fff" stroke-width="1.1"/></svg>
<div class=b style="left:1362px;top:728px;width:1px;height:40px;background:#5A5A5A"></div>
<span class=t style="left:152.00px;top:12.44px;font-size:12px;color:#F6E4E4;transform:scaleX(0.9909);">Кадры Грудкова : база данных- D:\Desktop\ИНФОРМАТИКА...</span>
<span class=t style="left:642.00px;top:12.44px;font-size:12px;color:#EBC6C7;transform:scaleX(0.9604);">Работа с макетами отчетов</span>
<span class=t style="left:15.40px;top:41.44px;font-size:12px;color:#FFFFFF;transform:scaleX(0.9690);">Файл</span>
<span class=t style="left:76.00px;top:41.44px;font-size:12px;color:#FFFFFF;transform:scaleX(0.9521);">Главная</span>
<span class=t style="left:149.00px;top:41.44px;font-size:12px;color:#FFFFFF;transform:scaleX(0.9607);">Создание</span>
<span class=t style="left:230.00px;top:41.44px;font-size:12px;color:#FFFFFF;transform:scaleX(0.9845);">Внешние данные</span>
<span class=t style="left:354.00px;top:41.44px;font-size:12px;color:#FFFFFF;transform:scaleX(0.9678);">Работа с базами данных</span>
<span class=t style="left:518.40px;top:41.44px;font-size:12px;color:#7A3B3E;transform:scaleX(1.0128);">Конструктор</span>
<span class=t style="left:616.50px;top:41.44px;font-size:12px;color:#FFFFFF;transform:scaleX(1.0011);">Упорядочить</span>
<span class=t style="left:718.00px;top:41.44px;font-size:12px;color:#FFFFFF;transform:scaleX(1.0014);">Формат</span>
<span class=t style="left:790.00px;top:41.44px;font-size:12px;color:#FFFFFF;transform:scaleX(1.0001);">Параметры страницы</span>
<span class=t style="left:956.80px;top:41.44px;font-size:12px;color:#F3D9D9;transform:scaleX(0.9513);">Что вы хотите сделать?</span>
<span class=t style="left:1331.00px;top:41.44px;font-size:12px;color:#FFFFFF;transform:scaleX(0.9206);">Вход</span>
<span class=t style="left:1200.00px;top:9.54px;font-size:13px;color:#FFFFFF;">?</span>
<span class=t style="left:4.00px;top:136.44px;font-size:12px;color:#555555;transform:scaleX(0.9425);">Режимы</span>
<span class=t style="left:106.40px;top:136.44px;font-size:12px;color:#555555;transform:scaleX(0.8769);">Темы</span>
<span class=t style="left:238.00px;top:136.44px;font-size:12px;color:#555555;transform:scaleX(1.0073);">Группировка и итоги</span>
<span class=t style="left:621.00px;top:136.44px;font-size:12px;color:#555555;transform:scaleX(0.9418);">Элементы управления</span>
<span class=t style="left:1005.00px;top:136.44px;font-size:12px;color:#555555;transform:scaleX(0.9448);">Колонтитулы</span>
<span class=t style="left:1163.00px;top:136.44px;font-size:12px;color:#555555;transform:scaleX(0.9004);">Сервис</span>
<span class=t style="left:6.50px;top:102.14px;font-size:12px;color:#383838;transform:scaleX(1.0135);">Режим</span>
<span class=t style="left:62.00px;top:102.64px;font-size:12px;color:#383838;transform:scaleX(0.9928);">Темы</span>
<span class=t style="left:120.50px;top:76.44px;font-size:12px;color:#383838;transform:scaleX(0.9271);">Цвета</span>
<span class=t style="left:120.50px;top:107.14px;font-size:12px;color:#383838;transform:scaleX(0.9873);">Шрифты</span>
<span class=t style="left:194.00px;top:102.14px;font-size:12px;color:#383838;transform:scaleX(1.0145);">Группировка</span>
<span class=t style="left:272.00px;top:73.01px;font-size:18px;color:#444;font-weight:700;transform:scaleX(1.3873);">Σ</span>
<span class=t style="left:291.00px;top:76.44px;font-size:12px;color:#383838;transform:scaleX(1.0079);">Итоги</span>
<span class=t style="left:291.00px;top:107.44px;font-size:12px;color:#383838;transform:scaleX(0.9872);">Без подробностей</span>
<span class=t style="left:494.00px;top:84.48px;font-size:23px;color:#666;font-style:italic;transform:scaleX(1.0661);">Aa</span>
<span class=t style="left:885.00px;top:102.14px;font-size:12px;color:#999999;transform:scaleX(0.9803);">Добавить</span>
<span class=t style="left:870.00px;top:117.94px;font-size:12px;color:#999999;transform:scaleX(1.0045);">изображение</span>
<span class=t style="left:967.00px;top:102.14px;font-size:12px;color:#383838;transform:scaleX(1.0086);">Номера</span>
<span class=t style="left:966.00px;top:117.44px;font-size:12px;color:#383838;transform:scaleX(0.9990);">страниц</span>
<span class=t style="left:1035.00px;top:67.44px;font-size:12px;color:#383838;transform:scaleX(1.0088);">Эмблема</span>
<span class=t style="left:1035.00px;top:90.44px;font-size:12px;color:#383838;transform:scaleX(1.0457);">Заголовок</span>
<span class=t style="left:1035.60px;top:114.44px;font-size:12px;color:#383838;transform:scaleX(0.9675);">Дата и время</span>
<span class=t style="left:1126.00px;top:102.44px;font-size:12px;color:#383838;transform:scaleX(0.9803);">Добавить</span>
<span class=t style="left:1139.00px;top:117.44px;font-size:12px;color:#383838;transform:scaleX(0.9840);">поля</span>
<span class=t style="left:1183.00px;top:102.44px;font-size:12px;color:#383838;transform:scaleX(0.9744);">Страница</span>
<span class=t style="left:1188.00px;top:117.44px;font-size:12px;color:#383838;transform:scaleX(1.0115);">свойств</span>
<span class=t style="left:10.00px;top:159.70px;font-size:20px;color:#AA4A4D;transform:scaleX(0.9942);">Все объекты Access</span>
<span class=t style="left:8.00px;top:190.34px;font-size:11px;color:#222;font-style:italic;transform:scaleX(0.8982);">Поиск...</span>
<span class=t style="left:43.00px;top:218.84px;font-size:11px;color:#505050;transform:scaleX(1.0354);">Параметр отдел, Премия</span>
<span class=t style="left:43.00px;top:242.84px;font-size:11px;color:#505050;transform:scaleX(1.0493);">Параметр пол</span>
<span class=t style="left:43.00px;top:266.85px;font-size:11px;color:#505050;transform:scaleX(1.0504);">Подарки НГ</span>
<span class=t style="left:43.00px;top:290.85px;font-size:11px;color:#505050;transform:scaleX(1.0449);">Премия</span>
<span class=t style="left:43.00px;top:314.85px;font-size:11px;color:#505050;transform:scaleX(1.0660);">Сколько сотрудников каждой специальности</span>
<span class=t style="left:43.00px;top:338.85px;font-size:11px;color:#505050;transform:scaleX(1.0616);">Сотрудники Запрос</span>
<span class=t style="left:43.00px;top:362.85px;font-size:11px;color:#505050;transform:scaleX(1.0503);">Сотрудники Запрос домашний адрес</span>
<span class=t style="left:43.00px;top:386.85px;font-size:11px;color:#505050;transform:scaleX(1.0720);">Сотрудники, образование</span>
<span class=t style="left:43.00px;top:410.85px;font-size:11px;color:#505050;transform:scaleX(1.0537);">Сотрудницы, доп работа</span>
<span class=t style="left:43.00px;top:434.85px;font-size:11px;color:#505050;transform:scaleX(1.0886);">Список городов</span>
<span class=t style="left:43.00px;top:458.85px;font-size:11px;color:#505050;transform:scaleX(1.0468);">Список с д/р</span>
<span class=t style="left:43.00px;top:482.85px;font-size:11px;color:#505050;transform:scaleX(1.0471);">Список специальностей</span>
<span class=t style="left:43.00px;top:506.85px;font-size:11px;color:#505050;transform:scaleX(1.0304);">Справка из двух полей</span>
<span class=t style="left:43.00px;top:530.84px;font-size:11px;color:#505050;transform:scaleX(1.0408);">Ср возраст, макс стаж</span>
<span class=t style="left:43.00px;top:554.84px;font-size:11px;color:#505050;transform:scaleX(1.0105);">Фамилии Д, В</span>
<span class=t style="left:43.00px;top:578.84px;font-size:11px;color:#505050;transform:scaleX(1.0184);">Этим летом</span>
<span class=t style="left:43.00px;top:602.84px;font-size:11px;color:#505050;transform:scaleX(1.0564);">Перекрестный запрос</span>
<span class=t style="left:14.00px;top:624.14px;font-size:12px;color:#555;font-weight:700;transform:scaleX(1.0484);">Формы</span>
<span class=t style="left:14.00px;top:642.14px;font-size:12px;color:#555;font-weight:700;transform:scaleX(1.0484);">Отчеты</span>
<span class=t style="left:43.00px;top:662.64px;font-size:11px;color:#505050;transform:scaleX(1.0800);">Должности</span>
<span class=t style="left:43.00px;top:686.74px;font-size:11px;color:#484848;transform:scaleX(1.0493);">Начислено по отделам</span>
<span class=t style="left:356.00px;top:158.44px;font-size:12px;color:#8E3A3D;font-weight:700;transform:scaleX(0.9321);">Начислено по отделам</span>
<span class=t style="left:378.00px;top:231.58px;font-size:24px;color:#7C8795;transform:scaleX(1.0230);">Начислено по отделам</span>
<span class=t style="left:397.70px;top:288.34px;font-size:13px;color:#808080;transform:scaleX(1.0283);">Название отдела</span>
<span class=t style="left:568.80px;top:290.74px;font-size:13px;color:#404040;transform:scaleX(1.0522);">IT-отдел</span>
<span class=t style="left:420.50px;top:314.94px;font-size:13px;color:#808080;transform:scaleX(1.0235);">Фамилия</span>
<span class=t style="left:591.00px;top:314.84px;font-size:13px;color:#808080;transform:scaleX(1.0679);">Табельный номер</span>
<span class=t style="left:735.30px;top:314.84px;font-size:13px;color:#808080;transform:scaleX(1.0245);">Оклад</span>
<span class=t style="left:421.50px;top:341.14px;font-size:13px;color:#404040;transform:scaleX(1.0267);">Аветисова</span>
<span class=t style="left:671.40px;top:341.14px;font-size:13px;color:#404040;transform:scaleX(0.9404);">17828</span>
<span class=t style="left:713.00px;top:341.14px;font-size:13px;color:#333;letter-spacing:-1.5px;transform:scaleX(1.1245);">#########</span>
<span class=t style="left:421.50px;top:366.14px;font-size:13px;color:#404040;transform:scaleX(1.0456);">Карибян</span>
<span class=t style="left:671.40px;top:366.14px;font-size:13px;color:#404040;transform:scaleX(0.9404);">17332</span>
<span class=t style="left:713.00px;top:366.14px;font-size:13px;color:#333;letter-spacing:-1.5px;transform:scaleX(1.1245);">#########</span>
<span class=t style="left:421.50px;top:391.14px;font-size:13px;color:#404040;transform:scaleX(1.0707);">Онищенко</span>
<span class=t style="left:671.40px;top:391.14px;font-size:13px;color:#404040;transform:scaleX(0.9404);">17345</span>
<span class=t style="left:713.00px;top:391.14px;font-size:13px;color:#333;letter-spacing:-1.5px;transform:scaleX(1.1245);">#########</span>
<span class=t style="left:421.50px;top:416.14px;font-size:13px;color:#404040;transform:scaleX(1.0289);">Савченко</span>
<span class=t style="left:671.40px;top:416.14px;font-size:13px;color:#404040;transform:scaleX(0.9404);">17554</span>
<span class=t style="left:713.00px;top:416.14px;font-size:13px;color:#333;letter-spacing:-1.5px;transform:scaleX(1.1245);">#########</span>
<span class=t style="left:421.50px;top:441.14px;font-size:13px;color:#404040;transform:scaleX(0.9975);">Сайко</span>
<span class=t style="left:671.40px;top:441.14px;font-size:13px;color:#404040;transform:scaleX(0.9404);">17490</span>
<span class=t style="left:713.00px;top:441.14px;font-size:13px;color:#333;letter-spacing:-1.5px;transform:scaleX(1.1245);">#########</span>
<span class=t style="left:399.00px;top:462.54px;font-size:13px;color:#333;transform:scaleX(1.0360);">Итоги для &#x27;Название отдела&#x27; =  IT-отдел (5 записей)</span>
<span class=t style="left:398.50px;top:482.34px;font-size:13px;color:#8C8C8C;transform:scaleX(0.9650);">Sum</span>
<span class=t style="left:713.00px;top:482.24px;font-size:13px;color:#333;letter-spacing:-1.5px;transform:scaleX(1.1245);">#########</span>
<span class=t style="left:397.70px;top:525.03px;font-size:13px;color:#808080;transform:scaleX(1.0283);">Название отдела</span>
<span class=t style="left:568.00px;top:526.83px;font-size:13px;color:#404040;transform:scaleX(1.0569);">Администрация</span>
<span class=t style="left:420.50px;top:551.74px;font-size:13px;color:#808080;transform:scaleX(1.0235);">Фамилия</span>
<span class=t style="left:591.00px;top:551.74px;font-size:13px;color:#808080;transform:scaleX(1.0679);">Табельный номер</span>
<span class=t style="left:735.30px;top:551.74px;font-size:13px;color:#808080;transform:scaleX(1.0245);">Оклад</span>
<span class=t style="left:421.50px;top:578.13px;font-size:13px;color:#404040;transform:scaleX(1.0534);">Грудкова</span>
<span class=t style="left:671.40px;top:578.13px;font-size:13px;color:#404040;transform:scaleX(0.9404);">17178</span>
<span class=t style="left:713.00px;top:578.13px;font-size:13px;color:#333;letter-spacing:-1.5px;transform:scaleX(1.1245);">#########</span>
<span class=t style="left:421.50px;top:603.13px;font-size:13px;color:#404040;transform:scaleX(1.0719);">Леонов</span>
<span class=t style="left:671.40px;top:603.13px;font-size:13px;color:#404040;transform:scaleX(0.9404);">17035</span>
<span class=t style="left:713.00px;top:603.13px;font-size:13px;color:#333;letter-spacing:-1.5px;transform:scaleX(1.1245);">#########</span>
<span class=t style="left:399.00px;top:624.53px;font-size:13px;color:#333;transform:scaleX(1.0342);">Итоги для &#x27;Название отдела&#x27; =  Администрация (2 записей)</span>
<span class=t style="left:398.50px;top:644.33px;font-size:13px;color:#8C8C8C;transform:scaleX(0.9650);">Sum</span>
<span class=t style="left:713.00px;top:644.53px;font-size:13px;color:#333;letter-spacing:-1.5px;transform:scaleX(1.1245);">#########</span>
<span class=t style="left:1011.70px;top:168.00px;font-size:20px;color:#B25C5E;transform:scaleX(1.0304);">Окно свойств</span>
<span class=t style="left:1007.00px;top:194.64px;font-size:12px;color:#444;transform:scaleX(0.9519);">Тип выделенного элемента:  Поле</span>
<span class=t style="left:1011.00px;top:217.44px;font-size:12px;color:#222;transform:scaleX(0.9603);">Оклад</span>
<span class=t style="left:1017.60px;top:245.94px;font-size:12px;color:#222;transform:scaleX(0.9509);">Макет</span>
<span class=t style="left:1066.70px;top:245.94px;font-size:12px;color:#222;transform:scaleX(0.9686);">Данные</span>
<span class=t style="left:1118.70px;top:245.94px;font-size:12px;color:#222;transform:scaleX(0.9183);">События</span>
<span class=t style="left:1176.80px;top:245.94px;font-size:12px;color:#222;transform:scaleX(0.9838);">Другие</span>
<span class=t style="left:1241.40px;top:244.44px;font-size:12px;color:#222;transform:scaleX(0.8314);">Все</span>
<span class=t style="left:1011.00px;top:269.39px;font-size:11.5px;color:#111;transform:scaleX(0.9900);">Расширение</span>
<span class=t style="left:1205.00px;top:269.39px;font-size:11.5px;color:#111;transform:scaleX(0.9900);">Нет</span>
<span class=t style="left:1011.00px;top:284.39px;font-size:11.5px;color:#111;transform:scaleX(0.9900);">Сжатие</span>
<span class=t style="left:1205.00px;top:284.39px;font-size:11.5px;color:#111;transform:scaleX(0.9900);">Нет</span>
<span class=t style="left:1011.00px;top:299.39px;font-size:11.5px;color:#111;transform:scaleX(0.9900);">Режим вывода</span>
<span class=t style="left:1205.00px;top:299.39px;font-size:11.5px;color:#111;transform:scaleX(0.9900);">Всегда</span>
<span class=t style="left:1011.00px;top:314.39px;font-size:11.5px;color:#111;transform:scaleX(0.9900);">Направление чтения</span>
<span class=t style="left:1205.00px;top:314.39px;font-size:11.5px;color:#111;transform:scaleX(0.9900);">Контекст</span>
<span class=t style="left:1011.00px;top:329.39px;font-size:11.5px;color:#111;transform:scaleX(0.9900);">Согласование полосы прокрутки</span>
<span class=t style="left:1205.00px;top:329.39px;font-size:11.5px;color:#111;transform:scaleX(0.9900);">Система</span>
<span class=t style="left:1011.00px;top:344.39px;font-size:11.5px;color:#111;transform:scaleX(0.9900);">Начертание цифр</span>
<span class=t style="left:1205.00px;top:344.39px;font-size:11.5px;color:#111;transform:scaleX(0.9900);">Система</span>
<span class=t style="left:1011.00px;top:359.39px;font-size:11.5px;color:#111;transform:scaleX(0.9900);">Маска ввода</span>
<span class=t style="left:1011.00px;top:374.39px;font-size:11.5px;color:#111;transform:scaleX(0.9900);">Включена</span>
<span class=t style="left:1205.00px;top:374.39px;font-size:11.5px;color:#111;transform:scaleX(0.9900);">Да</span>
<span class=t style="left:1011.00px;top:389.39px;font-size:11.5px;color:#111;transform:scaleX(0.9900);">Нажатие кнопки</span>
<span class=t style="left:1011.00px;top:404.39px;font-size:11.5px;color:#111;transform:scaleX(0.9900);">Получение фокуса</span>
<span class=t style="left:1011.00px;top:419.39px;font-size:11.5px;color:#111;transform:scaleX(0.9900);">Потеря фокуса</span>
<span class=t style="left:1011.00px;top:434.39px;font-size:11.5px;color:#111;transform:scaleX(0.9900);">Двойное нажатие кнопки</span>
<span class=t style="left:1011.00px;top:449.39px;font-size:11.5px;color:#111;transform:scaleX(0.9900);">Кнопка вниз</span>
<span class=t style="left:1011.00px;top:464.39px;font-size:11.5px;color:#111;transform:scaleX(0.9900);">Кнопка вверх</span>
<span class=t style="left:1011.00px;top:479.39px;font-size:11.5px;color:#111;transform:scaleX(0.9900);">Перемещение указателя</span>
<span class=t style="left:1011.00px;top:494.39px;font-size:11.5px;color:#111;transform:scaleX(0.9900);">Клавиша вниз</span>
<span class=t style="left:1011.00px;top:509.39px;font-size:11.5px;color:#111;transform:scaleX(0.9900);">Клавиша вверх</span>
<span class=t style="left:1011.00px;top:524.39px;font-size:11.5px;color:#111;transform:scaleX(0.9900);">Нажатие клавиши</span>
<span class=t style="left:1011.00px;top:539.39px;font-size:11.5px;color:#111;transform:scaleX(0.9900);">Вход</span>
<span class=t style="left:1011.00px;top:554.39px;font-size:11.5px;color:#111;transform:scaleX(0.9900);">Выход</span>
<span class=t style="left:1011.00px;top:569.39px;font-size:11.5px;color:#111;transform:scaleX(0.9900);">Всплывающая подсказка</span>
<span class=t style="left:1011.00px;top:584.39px;font-size:11.5px;color:#111;transform:scaleX(0.9900);">Порядок перехода по Tab</span>
<span class=t style="left:1205.00px;top:584.39px;font-size:11.5px;color:#111;transform:scaleX(0.9900);">2</span>
<span class=t style="left:1011.00px;top:599.39px;font-size:11.5px;color:#111;transform:scaleX(0.9900);">Переход по Tab</span>
<span class=t style="left:1205.00px;top:599.39px;font-size:11.5px;color:#111;transform:scaleX(0.9900);">Да</span>
<span class=t style="left:1011.00px;top:614.39px;font-size:11.5px;color:#111;transform:scaleX(0.9900);">Текст строки состояния</span>
<span class=t style="left:1011.00px;top:629.39px;font-size:11.5px;color:#111;transform:scaleX(0.9900);">Контекстное меню</span>
<span class=t style="left:1011.00px;top:644.39px;font-size:11.5px;color:#111;transform:scaleX(0.9900);">Идентификатор справки</span>
<span class=t style="left:1205.00px;top:644.39px;font-size:11.5px;color:#111;transform:scaleX(0.9900);">0</span>
<span class=t style="left:1011.00px;top:659.39px;font-size:11.5px;color:#111;transform:scaleX(0.9900);">По вертикали</span>
<span class=t style="left:1205.00px;top:659.39px;font-size:11.5px;color:#111;transform:scaleX(0.9900);">Нет</span>
<span class=t style="left:1011.00px;top:674.39px;font-size:11.5px;color:#111;transform:scaleX(0.9900);">Дополнительные сведения</span>
<span class=t style="left:7.00px;top:710.94px;font-size:12px;color:#444;transform:scaleX(0.9499);">Режим макета</span>
<span class=t style="left:1143.80px;top:710.94px;font-size:12px;color:#555;transform:scaleX(0.9254);">Num Lock</span>
<span class=t style="left:1218.00px;top:742.44px;font-size:12px;color:#FFFFFF;transform:scaleX(0.9155);">РУС</span>
<span class=t style="left:1266.00px;top:734.44px;font-size:12px;color:#FFFFFF;transform:scaleX(0.8991);">20:56</span>
<span class=t style="left:1252.00px;top:751.44px;font-size:12px;color:#FFFFFF;transform:scaleX(0.9157);">27.05.2019</span>
</body></html>
